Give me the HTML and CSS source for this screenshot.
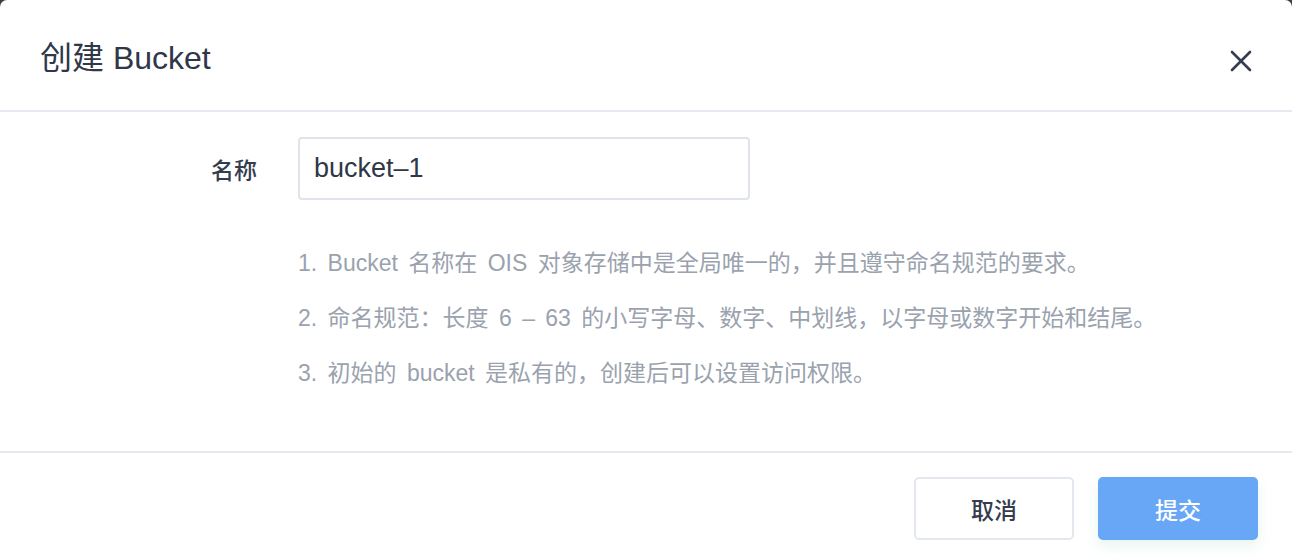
FILE: index.html
```html
<!DOCTYPE html>
<html lang="zh">
<head>
<meta charset="utf-8">
<title>创建 Bucket</title>
<link rel="stylesheet" href="styles.css">
</head>
<body>
<div class="modal">
  <div class="modal-header">
    <h2 class="modal-title">创建 Bucket</h2>
    <button class="close" aria-label="关闭">
      <svg width="22" height="22" viewBox="0 0 22 22"><path d="M2 2L20 20M20 2L2 20" stroke="#353d50" stroke-width="2.6" stroke-linecap="round"/></svg>
    </button>
  </div>
  <div class="modal-body">
    <div class="form-row">
      <label class="label">名称</label>
      <div class="field">
        <div class="input">bucket–1</div>
      </div>
    </div>
    <ol class="tips">
      <li>1. Bucket 名称在 OIS 对象存储中是全局唯一的，并且遵守命名规范的要求。</li>
      <li>2. 命名规范：长度 6 – 63 的小写字母、数字、中划线，以字母或数字开始和结尾。</li>
      <li>3. 初始的 bucket 是私有的，创建后可以设置访问权限。</li>
    </ol>
  </div>
  <div class="modal-footer">
    <button class="btn btn-default">取消</button>
    <button class="btn btn-primary">提交</button>
  </div>
</div>
</body>
</html>
```

FILE: styles.css
```css
* { box-sizing: border-box; }
html, body {
  margin: 0;
  padding: 0;
  background: #3d3d3d;
  height: 100%;
  overflow: hidden;
}
body {
  font-family: "Liberation Sans", "Noto Sans CJK SC", sans-serif;
  color: #2f3749;
}
.modal {
  background: #fff;
  border-radius: 7px 7px 0 0;
  height: 560px;
}
.modal-header {
  height: 112px;
  border-bottom: 2px solid #e6e9ef;
  display: flex;
  align-items: center;
  justify-content: space-between;
  padding: 0 40px 0 40px;
}
.modal-title {
  margin: 0;
  font-size: 32px;
  font-weight: 400;
  color: #2f3749;
}
.close {
  border: 0;
  background: none;
  padding: 0;
  width: 22px;
  height: 22px;
  display: flex;
  position: relative;
  top: 6px;
}
.modal-body {
  padding: 25px 0 0 0;
  height: 341px;
  border-bottom: 2px solid #e6e9ef;
}
.form-row {
  display: flex;
  align-items: center;
}
.label {
  width: 258px;
  text-align: right;
  font-family: "Noto Sans CJK SC", sans-serif;
  font-size: 23px;
  font-weight: 500;
  color: #343c4e;
  padding-right: 1px;
}
.field {
  margin-left: 40px;
}
.input {
  width: 452px;
  height: 63px;
  border: 2px solid #dfe3ea;
  border-radius: 4px;
  padding: 0 14px;
  display: flex;
  align-items: center;
  font-size: 27px;
  color: #2f3749;
}
.tips {
  list-style: none;
  margin: 36px 0 0 298px;
  padding: 0;
  font-size: 23px;
  word-spacing: 4px;
  color: #9aa2ae;
}
.tips li {
  height: 55px;
  line-height: 55px;
  white-space: nowrap;
}
.modal-footer {
  display: flex;
  justify-content: flex-end;
  gap: 24px;
  padding: 24px 34px 0 0;
}
.btn {
  width: 160px;
  height: 63px;
  border-radius: 5px;
  font-family: "Noto Sans CJK SC", sans-serif;
  font-size: 23px;
  font-weight: 500;
}
.btn-default {
  background: #fff;
  border: 2px solid #e3e7ee;
  color: #343c4e;
}
.btn-primary {
  background: #68a6f6;
  border: 0;
  color: #fff;
  box-shadow: 0 6px 14px rgba(120, 200, 160, 0.18);
}
```
